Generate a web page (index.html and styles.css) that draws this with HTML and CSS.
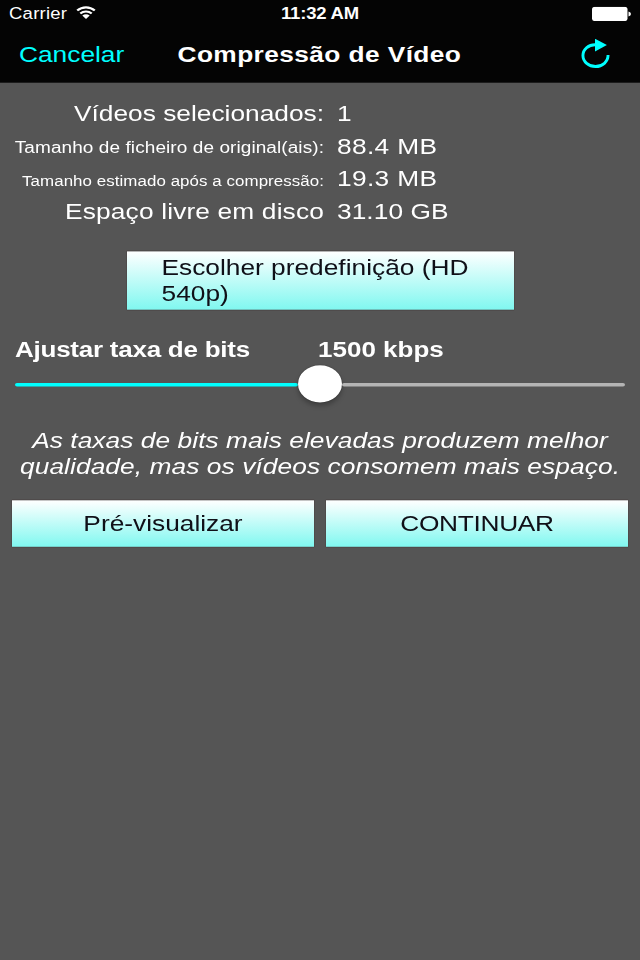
FILE: index.html
```html
<!DOCTYPE html>
<html lang="pt">
<head>
<meta charset="utf-8">
<title>Compressão de Vídeo</title>
<link rel="stylesheet" href="styles.css">
</head>
<body>
<div class="screen">
  <header class="header">
    <div class="status">
      <div class="carrier">
        <span>Carrier</span>
        <svg class="wifi" viewBox="0 0 20 15" preserveAspectRatio="none">
          <path d="M1.2 5.2C6.2 .4 13.8 .4 18.8 5.2M4.3 8.5C7.5 5.5 12.5 5.5 15.7 8.5" fill="none" stroke="#fff" stroke-width="2.3"/>
          <path d="M6.3 10.7C8.5 8.9 11.5 8.9 13.7 10.7L10 14.5Z" fill="#fff"/>
        </svg>
      </div>
      <span class="time">11:32 AM</span>
      <svg class="battery" viewBox="0 0 39 17" preserveAspectRatio="none">
        <rect width="35.5" height="17" rx="3" fill="#fff"/>
        <path d="M36.5 5.5Q39 6.5 39 8.5T36.5 11.5Z" fill="#fff"/>
      </svg>
    </div>
    <nav class="nav">
      <span class="cancel">Cancelar</span>
      <h1 class="title">Compressão de Vídeo</h1>
      <svg class="refresh" viewBox="0 0 30 30" preserveAspectRatio="none">
        <path d="M15.500 6C8 5.500 2 10.500 2 17C2 23.300 8 28.200 15 28.200C22.200 28.200 28 23.200 28 16.500" fill="none" stroke="#0ff" stroke-width="3"/>
        <path d="M14.500 0L26.800 6.200L14.500 13Z" fill="#0ff"/>
      </svg>
    </nav>
  </header>
  <main class="main">
    <dl class="info">
      <dt>Vídeos selecionados:</dt><dd>1</dd>
      <dt class="small">Tamanho de ficheiro de original(ais):</dt><dd>88.4 MB</dd>
      <dt class="tiny">Tamanho estimado após a compressão:</dt><dd>19.3 MB</dd>
      <dt class="disk">Espaço livre em disco</dt><dd class="free">31.10 GB</dd>
    </dl>
    <div class="button preset">Escolher predefinição (HD<br>540p)</div>
    <div class="rate"><span class="rate-label">Ajustar taxa de bits</span><span>1500 kbps</span></div>
    <div class="slider"><div class="filled"></div><div class="thumb"></div><div class="rest"></div></div>
    <p class="note"><span class="line-one">As taxas de bits mais elevadas produzem melhor</span><br><span class="line-two">qualidade, mas os vídeos consomem mais espaço.</span></p>
    <div class="actions">
      <div class="button preview">Pré-visualizar</div>
      <div class="button continue">CONTINUAR</div>
    </div>
  </main>
</div>
</body>
</html>
```
FILE: styles.css
```css
* { box-sizing: border-box; }
html, body { margin: 0; width: 640px; height: 960px; overflow: hidden; background: #555; }
/* The tall layout is fitted to a 640x960 viewport. */
.screen {
  width: 640px; height: 1137px; margin-bottom: -177px;
  transform: scaleY(.84375); transform-origin: 0 0;
  color: #fff;
  font: 26.3px/38.7px "Liberation Sans", Arial, sans-serif;
  white-space: nowrap;
}
.header { height: 98.4px; background: #040404; }
.status {
  height: 33.2px; padding: 0 9px;
  display: grid; grid-template-columns: 1fr auto 1fr; align-items: center;
  font-size: 18.5px; line-height: 33.2px;
}
.carrier { display: flex; align-items: center; gap: 9px; letter-spacing: .25px; }
.wifi { width: 20px; height: 16px; margin-top: -3px; }
.time { font-weight: bold; letter-spacing: -.2px; }
.battery { width: 39px; height: 17px; justify-self: end; margin-top: -1px; }
.nav {
  height: 65.2px; padding: 0 30px 0 19px;
  display: grid; grid-template-columns: 158.5px 1fr 29px; align-items: center;
}
.cancel { color: #0ff; }
.title { margin: 0; font-size: 26.3px; letter-spacing: .4px; }
.refresh { width: 29px; height: 35px; margin-top: -4px; }
.main { padding-top: 17px; }
.info {
  margin: 0; display: grid; grid-template-columns: 324px 1fr;
  grid-auto-rows: 38.7px; column-gap: 13px;
}
.info dt { text-align: right; }
.info dd { margin: 0; letter-spacing: .35px; }
.info .free { letter-spacing: .05px; }
.info .small { font-size: 19px; line-height: 42px; letter-spacing: .08px; }
.info .tiny { font-size: 16.9px; line-height: 44px; letter-spacing: .07px; }
.info .disk { letter-spacing: .15px; }
.button {
  background: linear-gradient(#fff, #80f8f0);
  color: #101018;
  box-shadow: 0 0 1px #301818;
}
.preset {
  width: 387px; height: 69px; margin: 28px auto 0;
  padding: 4px 0 0 35px; line-height: 31.2px;
}
.rate {
  margin-top: 27.5px; padding-left: 15px;
  display: grid; grid-template-columns: 303px 1fr;
  font-weight: bold; font-size: 26px;
}
.rate-label { letter-spacing: -.25px; }
.slider {
  height: 44px; margin: -.5px 15px 0;
  display: flex; align-items: center;
}
.filled, .rest { height: 4px; flex: 1; background: #0ff; border-radius: 2px; margin-top: 2px; }
.rest { background: #b4b4b4; }
.thumb {
  width: 43.5px; height: 44px; border-radius: 50%; background: #fff;
  box-shadow: 0 4px 6px #0004, 0 0 1px #000;
}
.note { margin: 30px 0 0; text-align: center; font-style: italic; line-height: 30.9px; }
.line-one { letter-spacing: .06px; }
.line-two { letter-spacing: .08px; }
.actions { display: flex; gap: 12px; padding: 0 12px; margin-top: 24px; }
.actions .button { flex: 1; height: 55px; line-height: 55px; text-align: center; }
.continue { letter-spacing: -.3px; }
```
